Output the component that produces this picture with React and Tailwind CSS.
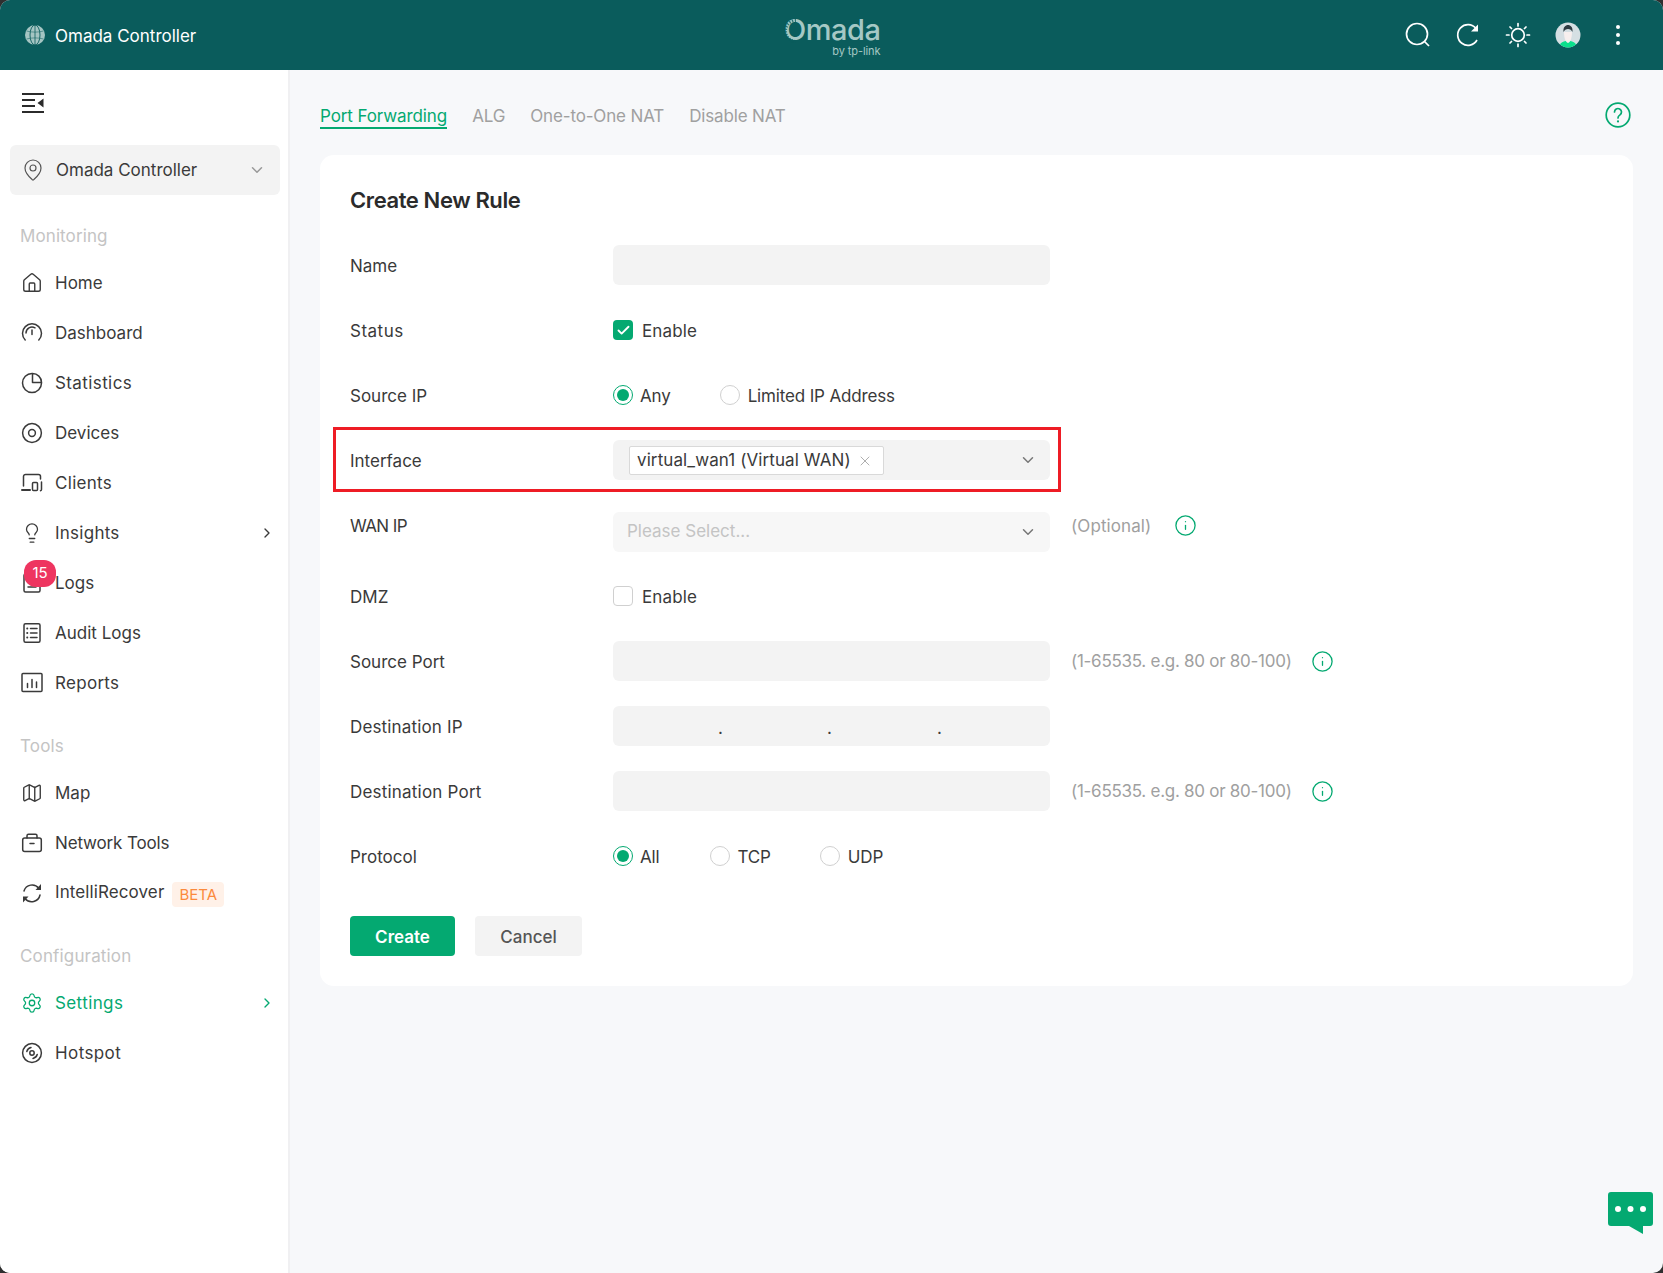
import { ChevronDown, ChevronRight, Info, Lightbulb, Map as MapIcon, Settings, Home, Check, X, MapPin } from 'lucide-react'

const green = 'text-[#04a971]'

function Ico({ children, className = 'h-[22px] w-[22px]' }) {
  return (
    <svg viewBox="0 0 22 22" fill="none" stroke="currentColor" strokeWidth="1.5" strokeLinecap="round" strokeLinejoin="round" className={className}>
      {children}
    </svg>
  )
}

const DashboardIcon = () => (
  <Ico>
    <path d="M4.200 18A9.500 9.500 0 1 1 17.800 18" />
    <path d="M5 11a6 6 0 0 1 9-5.200" />
    <path d="M11 8v4.500" />
  </Ico>
)
const StatsIcon = () => (
  <Ico>
    <path d="M11 1.500a9.500 9.500 0 1 0 9.500 9.500" />
    <path d="M11.500 1.500v9h9a9 9 0 0 0-9-9z" />
  </Ico>
)
const DevicesIcon = () => (
  <Ico>
    <circle cx="11" cy="11" r="9.400" />
    <circle cx="11" cy="11" r="3.400" />
  </Ico>
)
const ClientsIcon = () => (
  <Ico>
    <path d="M2.500 14V4.500a2 2 0 0 1 2-2h13a2 2 0 0 1 2 2V7" />
    <path d="M1 18h8" strokeWidth="2" />
    <rect x="11.500" y="10.500" width="5" height="8" rx="1" />
    <path d="M20.500 10v7.500a1.200 1.200 0 0 1-1 1.200" />
  </Ico>
)
const LogsIcon = () => (
  <Ico>
    <rect x="3" y="2" width="16" height="18" rx="1.500" />
    <path d="M7 15h8" />
  </Ico>
)
const AuditIcon = () => (
  <Ico>
    <rect x="3" y="1.800" width="16" height="18.400" rx="1.500" />
    <path d="M9.500 6.500H16M9.500 11H16M9.500 15.500H16" />
    <path d="M6.200 6.500h.1M6.200 11h.1M6.200 15.500h.1" strokeWidth="2" />
  </Ico>
)
const ReportsIcon = () => (
  <Ico>
    <rect x="1" y="1.500" width="20" height="18" rx="1" />
    <path d="M6.500 11.500v4M11 7.500v8M15.500 10v5.500" />
  </Ico>
)
const ToolsIcon = () => (
  <Ico>
    <rect x="1.700" y="6" width="18.600" height="13.500" rx="2" />
    <path d="M6 6V3.800a1.500 1.500 0 0 1 1.500-1.500h7A1.500 1.500 0 0 1 16 3.800V6" />
    <path d="M9 11.500h4" />
  </Ico>
)
const RecoverIcon = () => (
  <Ico>
    <path d="M3 9a8.500 8.500 0 0 1 14.800-2.800" />
    <path d="M19 13a8.500 8.500 0 0 1-14.800 3.800" />
    <path d="M20 2v6h-5.500z" fill="currentColor" strokeWidth="0" />
    <path d="M2 20.500v-6h5.500z" fill="currentColor" strokeWidth="0" />
  </Ico>
)
const HotspotIcon = () => (
  <Ico>
    <circle cx="11" cy="11" r="9.400" />
    <circle cx="11" cy="11" r="2.200" />
    <path d="M5.800 9.500A5.500 5.500 0 0 1 10 5.600" />
    <path d="M16.200 12.500A5.500 5.500 0 0 1 12 16.400" />
  </Ico>
)

const monitoring = [
  { name: 'Home', icon: <Home size={22} strokeWidth={1.5} /> },
  { name: 'Dashboard', icon: <DashboardIcon /> },
  { name: 'Statistics', icon: <StatsIcon />, tracking: 'tracking-[0.4px]' },
  { name: 'Devices', icon: <DevicesIcon /> },
  { name: 'Clients', icon: <ClientsIcon />, tracking: 'tracking-[0.3px]' },
  { name: 'Insights', icon: <Lightbulb size={24} strokeWidth={1.4} />, arrow: true, tracking: 'tracking-[0.25px]' },
  { name: 'Logs', icon: <LogsIcon />, badge: '15' },
  { name: 'Audit Logs', icon: <AuditIcon /> },
  { name: 'Reports', icon: <ReportsIcon />, tracking: 'tracking-[0.3px]' },
]

function NavItem({ item, active }) {
  return (
    <div className={`relative flex h-[50px] items-center pl-[21px] pr-[13px] ${active ? green : 'text-[#3a3a3a]'}`}>
      <span className="flex w-[22px] justify-center">{item.icon}</span>
      <span className={`ml-[12px] ${item.beta ? '' : 'pt-[1px]'} ${item.tracking || ''}`}>{item.name}</span>
      {item.beta && (
        <span className="ml-[8px] mt-[2px] rounded-[4px] bg-[#fff1e8] px-[7px] py-[3px] text-[15px] leading-[19px] text-[#fb8a3c]">BETA</span>
      )}
      {item.arrow && <ChevronRight size={16} strokeWidth={2} className="ml-auto" />}
      {item.badge && (
        <span className="absolute left-[24px] top-[2px] flex h-[27px] w-[32px] items-center justify-center rounded-[12px] bg-[#ee3560] text-[15px] text-white">
          {item.badge}
        </span>
      )}
    </div>
  )
}

function Label({ children }) {
  return <div className="mb-[10px] mt-[26px] h-[24px] pl-[20px] leading-[24px] tracking-[0.15px] text-[#c4c4c4]">{children}</div>
}

function Sidebar() {
  return (
    <aside className="w-[290px] shrink-0 border-r-2 border-[#f0f0f2] bg-white">
      <div className="flex h-[75px] items-start pl-[22px] pt-[23px]">
        <svg viewBox="0 0 22 20" className="h-[20px] w-[22px]" fill="none" stroke="#2b2b2b" strokeWidth="2">
          <path d="M0 1h22M0 7h13M0 13h13M0 19h22" />
          <path d="M21.500 5.500v9l-6-4.500z" fill="#2b2b2b" stroke="none" />
        </svg>
      </div>
      <div className="ml-[10px] mr-[8px] flex h-[50px] items-center rounded-[6px] bg-[#f3f3f3] pl-[11px] pr-[14px] text-[#3a3a3a]">
        <MapPin size={24} strokeWidth={1.2} className="text-[#555]" />
        <span className="ml-[11px] pt-[2px]">Omada Controller</span>
        <ChevronDown size={18} className="ml-auto text-[#999]" />
      </div>
      <div className="mb-[10px] mt-[29px] h-[24px] pl-[20px] leading-[24px] tracking-[0.1px] text-[#c4c4c4]">Monitoring</div>
      {monitoring.map((item) => (
        <NavItem key={item.name} item={item} />
      ))}
      <Label>Tools</Label>
      <NavItem item={{ name: 'Map', icon: <MapIcon size={22} strokeWidth={1.5} /> }} />
      <NavItem item={{ name: 'Network Tools', icon: <ToolsIcon />, tracking: 'tracking-[-0.15px]' }} />
      <NavItem item={{ name: 'IntelliRecover', icon: <RecoverIcon />, beta: true, tracking: 'tracking-[0.1px]' }} />
      <Label>Configuration</Label>
      <NavItem active item={{ name: 'Settings', icon: <Settings size={24} strokeWidth={1.4} />, arrow: true, tracking: 'tracking-[0.4px]' }} />
      <NavItem item={{ name: 'Hotspot', icon: <HotspotIcon />, tracking: 'tracking-[0.4px]' }} />
    </aside>
  )
}

function Header() {
  return (
    <header className="relative flex h-[70px] shrink-0 items-center bg-[#0a5c5c] text-white">
      <svg viewBox="0 0 20 20" className="ml-[25px] h-[20px] w-[20px]">
        <circle cx="10" cy="10" r="10" fill="#a5c5c3" />
        <path d="M10 0v20" stroke="#0a5c5c" strokeWidth="0.8" />
        <path d="M1.500 6c5 1.500 12 1.500 17 0M1.500 14c5-1.500 12-1.500 17 0" fill="none" stroke="#0a5c5c" strokeWidth="0.5" />
        <ellipse cx="10" cy="10" rx="5" ry="10" fill="none" stroke="#0a5c5c" strokeWidth="0.9" />
      </svg>
      <span className="ml-[10px] pt-[4px]">Omada Controller</span>
      <div className="absolute left-[784px] top-[15px] flex flex-col items-end text-[#a5c8c5]">
        <span className="text-[29px] font-medium leading-[30px] tracking-[-0.5px]">Omada</span>
        <span className="text-[11px] leading-[12px] tracking-[-0.1px]">by tp-link</span>
        <svg viewBox="0 0 24 24" className="absolute left-0 top-[4px] h-[24px] w-[24px]" fill="none" stroke="#0a5c5c" strokeWidth="0.8">
          <path d="M12 1.500A10.500 10.500 0 0 0 12 22.500" strokeDasharray="1.200 1.600" strokeWidth="3" opacity="0.8" />
        </svg>
      </div>
      <div className="ml-auto flex items-center">
        <svg viewBox="0 0 26 26" className="mr-[25px] h-[26px] w-[26px]" fill="none" stroke="white" strokeWidth="1.700">
          <circle cx="12" cy="12" r="10.500" />
          <path d="M19.500 19.500l4.500 4.500" />
        </svg>
        <svg viewBox="0 0 24 24" className="mr-[25px] h-[24px] w-[24px]" fill="none" stroke="white" strokeWidth="1.700">
          <path d="M21 17a10.300 10.300 0 1 1-1-11.500" />
          <path d="M22 1.500v7h-7z" fill="white" stroke="none" />
        </svg>
        <svg viewBox="0 0 26 26" className="mr-[24px] h-[26px] w-[26px]" fill="none" stroke="white" strokeWidth="1.700" strokeLinecap="round">
          <circle cx="13" cy="13" r="6.300" />
          <path d="M13 1.500v2.500M13 22v2.500M1.500 13H4M22 13h2.500M5 5l1.500 1.500M19.500 19.500L21 21M5 21l1.500-1.500M19.500 6.500L21 5" />
        </svg>
        <svg viewBox="0 0 26 26" className="h-[26px] w-[26px]">
          <defs>
            <clipPath id="avatar-clip"><circle cx="13" cy="13" r="12.500" /></clipPath>
          </defs>
          <g clipPath="url(#avatar-clip)">
            <rect width="26" height="26" fill="#d5dfe3" />
            <path d="M3 27c1-6 5-8 10-8s9 2 10 8z" fill="#0be08d" />
            <path d="M9 10c0 6 1.500 10 4 11 2.500-1 4-5 4-11z" fill="#f7efee" />
            <path d="M8.500 10c-.5-5 2-7 4.500-7s5 2 4.500 7c-1-2-2.500-3-4.500-3s-3.500 1-4.500 3z" fill="#2f3b42" />
          </g>
        </svg>
        <div className="ml-[35px] mr-[43px] flex flex-col gap-[4px]">
          <span className="h-[4px] w-[4px] rounded-full bg-white" />
          <span className="h-[4px] w-[4px] rounded-full bg-white" />
          <span className="h-[4px] w-[4px] rounded-full bg-white" />
        </div>
      </div>
    </header>
  )
}

function Row({ label, children, className = 'mb-[25px]', tracking = '' }) {
  return (
    <div className={`relative flex h-[40px] items-center ${className}`}>
      <div className={`w-[263px] shrink-0 pt-[4px] text-[#3a3a3a] ${tracking}`}>{label}</div>
      {children}
    </div>
  )
}

function Field() {
  return <div className="h-[40px] w-[437px] rounded-[6px] bg-[#f3f3f3]" />
}

function PortHint() {
  return (
    <>
      <span className="ml-[21px] pt-[2px] tracking-[-0.27px] text-[#a0a0a0]">(1-65535. e.g. 80 or 80-100)</span>
      <Info size={23} strokeWidth={1.35} className={`ml-[19px] ${green}`} />
    </>
  )
}

function Radio({ on, label, className = '' }) {
  return (
    <span className={`flex items-center ${className}`}>
      <span className={`flex h-[20px] w-[20px] items-center justify-center rounded-full border ${on ? 'border-[#04a971]' : 'border-[#d0d0d0]'}`}>
        {on && <span className="h-[12px] w-[12px] rounded-full bg-[#04a971]" />}
      </span>
      <span className={`pt-[4px] tracking-[-0.15px] text-[#3a3a3a] ${on ? 'ml-[7px]' : 'ml-[8px]'}`}>{label}</span>
    </span>
  )
}

function CheckBox({ on }) {
  return (
    <span className="flex items-center">
      <span className={`flex h-[20px] w-[20px] items-center justify-center rounded-[4px] ${on ? 'bg-[#04a971]' : 'border border-[#d0d0d0]'}`}>
        {on && <Check size={15} strokeWidth={3} className="text-white" />}
      </span>
      <span className="ml-[9px] pt-[4px] tracking-[0.15px] text-[#3a3a3a]">Enable</span>
    </span>
  )
}

function Form() {
  return (
    <div className="mt-[26px] h-[831px] rounded-[14px] bg-white px-[30px] pt-[30px]">
      <h2 className="mb-[30px] text-[22px] font-semibold leading-[30px] tracking-[-0.4px] text-[#2b2b2b]">Create New Rule</h2>
      <Row label="Name"><Field /></Row>
      <Row label="Status" tracking="tracking-[0.5px]"><CheckBox on /></Row>
      <Row label="Source IP">
        <Radio on label="Any" />
        <Radio label="Limited IP Address" className="ml-[49px]" />
      </Row>
      <Row label="Interface">
        <div className="flex h-[40px] w-[437px] items-center rounded-[6px] bg-[#f3f3f3] pl-[16px] pr-[13px]">
          <span className="flex h-[29px] w-[255px] items-center rounded-[2px] border border-[#d9d9d9] bg-white pl-[7px] pr-[10px] pt-[2px] tracking-[0.1px] text-[#3a3a3a]">
            virtual_wan1 (Virtual WAN)
            <X size={16} strokeWidth={1.2} className="ml-auto text-[#999]" />
          </span>
          <ChevronDown size={18} className="ml-auto text-[#777]" />
        </div>
        <div className="absolute -bottom-[12px] -left-[17px] -top-[13px] w-[728px] border-[3px] border-[#ee1c25]" />
      </Row>
      <Row label="WAN IP" className="mb-[31px]" tracking="tracking-[-0.6px]">
        <div className="mt-[14px] flex h-[40px] w-[437px] items-center rounded-[6px] bg-[#f7f7f7] pl-[14px] pr-[13px] text-[#c4c4c4]">
          Please Select...
          <ChevronDown size={18} className="ml-auto text-[#777]" />
        </div>
        <span className="ml-[21px] pt-[4px] tracking-[0.1px] text-[#a0a0a0]">(Optional)</span>
        <Info size={23} strokeWidth={1.35} className={`ml-[23px] ${green}`} />
      </Row>
      <Row label="DMZ"><CheckBox /></Row>
      <Row label="Source Port">
        <Field />
        <PortHint />
      </Row>
      <Row label="Destination IP" tracking="tracking-[0.15px]">
        <div className="flex h-[40px] w-[437px] rounded-[6px] bg-[#f3f3f3] text-[#3a3a3a]">
          <span className="w-[110px] pt-[10px] text-right">.</span>
          <span className="w-[109px] pt-[10px] text-right">.</span>
          <span className="w-[110px] pt-[10px] text-right">.</span>
        </div>
      </Row>
      <Row label="Destination Port" tracking="tracking-[0.2px]">
        <Field />
        <PortHint />
      </Row>
      <Row label="Protocol">
        <Radio on label="All" />
        <Radio label="TCP" className="ml-[50px]" />
        <Radio label="UDP" className="ml-[49px]" />
      </Row>
      <div className="mt-[40px] flex gap-[20px]">
        <button className="h-[40px] w-[105px] rounded-[4px] bg-[#04a971] pt-[4px] font-semibold text-white">Create</button>
        <button className="h-[40px] w-[107px] rounded-[4px] bg-[#f3f3f3] pt-[4px] font-medium text-[#555]">Cancel</button>
      </div>
    </div>
  )
}

export default function App() {
  return (
    <div className="min-h-screen bg-[#2f2f2f] font-['Inter',sans-serif] text-[17px]">
      <div className="flex h-screen flex-col overflow-hidden rounded-[10px] bg-[#f7f8fa]">
        <Header />
        <div className="flex flex-1">
          <Sidebar />
          <main className="relative flex-1 px-[30px] pt-[33px]">
            <div className="flex items-start gap-[25px] tracking-[-0.15px] text-[#a0a0a0]">
              <span className="h-[26px] border-b-2 border-[#04a971] leading-[26px] tracking-[-0.1px] text-[#04a971]">Port Forwarding</span>
              <span className="leading-[26px]">ALG</span>
              <span className="leading-[26px]">One-to-One NAT</span>
              <span className="leading-[26px]">Disable NAT</span>
              <svg viewBox="0 0 26 26" className={`ml-auto -mt-[1px] mr-[2px] h-[26px] w-[26px] ${green}`} fill="none" stroke="currentColor" strokeWidth="1.700" strokeLinecap="round">
                <circle cx="13" cy="13" r="11.800" />
                <path d="M9.500 10a3.500 3.500 0 1 1 5.500 2.900c-1.200.8-2 1.500-2 3" />
                <path d="M13 19.400v.1" strokeWidth="2.200" />
              </svg>
            </div>
            <Form />
            <svg viewBox="0 0 45 42" className="absolute bottom-[39px] right-[10px] h-[42px] w-[45px]">
              <path d="M3 0h39a3 3 0 0 1 3 3v28a3 3 0 0 1-3 3h-7v8l-14-8H3a3 3 0 0 1-3-3V3a3 3 0 0 1 3-3z" fill="#04a971" />
              <circle cx="10" cy="17" r="3" fill="white" />
              <circle cx="22.500" cy="17" r="3" fill="white" />
              <circle cx="35" cy="17" r="3" fill="white" />
            </svg>
          </main>
        </div>
      </div>
    </div>
  )
}
